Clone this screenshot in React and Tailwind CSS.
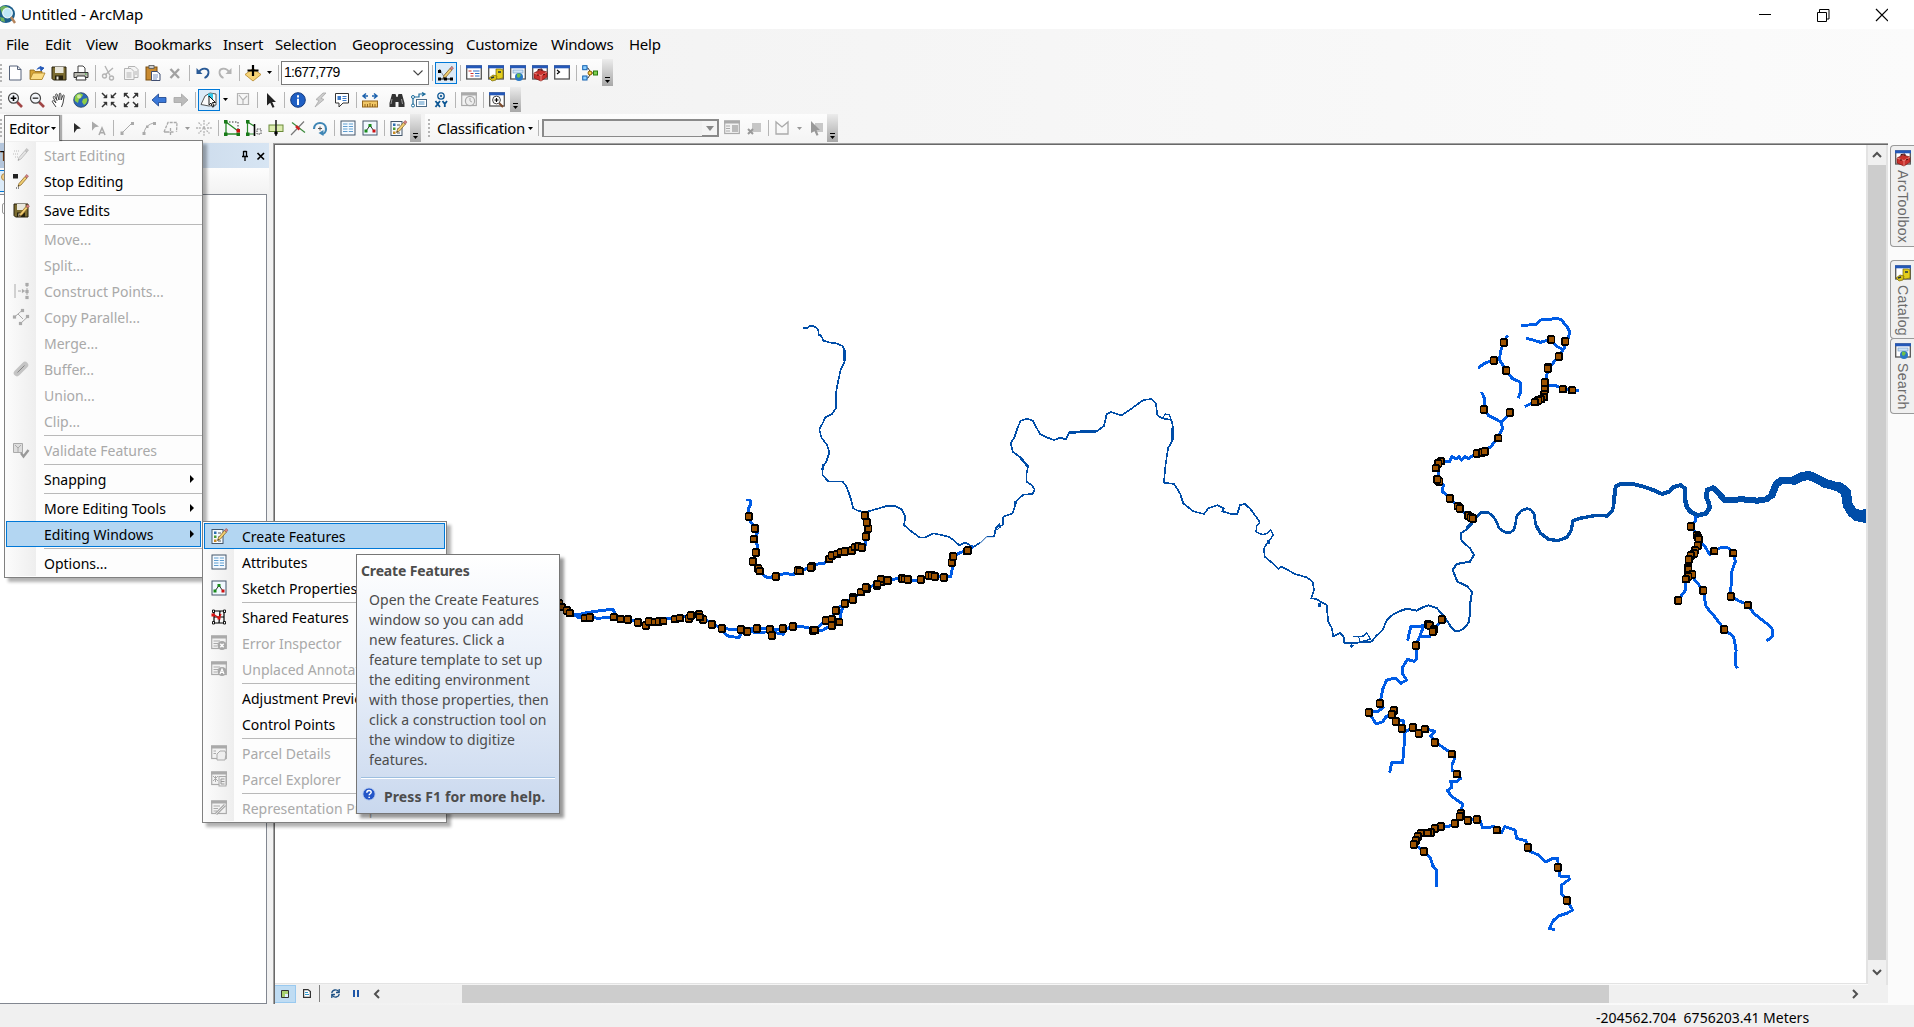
import React from "react";

const NAVY = "#004da8";
const BLUE = "#005ce6";
const GRAY = "#b4b4b4";

/* ---------- icons, drawn on a 16x16 grid ---------- */

const win = (
  <>
    <rect x=".7" y="1" width="14.6" height="13" fill="#fff" stroke="#555" strokeWidth="1.3" />
    <rect x="0" y=".3" width="16" height="3" fill="#2458b8" />
  </>
);
const grayWin = (
  <>
    <rect x=".7" y="1" width="14.6" height="12.5" fill="#f2f2f2" stroke="#aaa" strokeWidth="1.2" />
    <rect x="0" y=".5" width="16" height="3" fill="#aaa" />
  </>
);
const redBox = (
  <>
    <path d="M2 8l6-3 7 2v5l-6 4-7-3z" fill="#c9302c" stroke="#7d1512" strokeWidth=".7" />
    <path d="M2 8l7 2.6L15 7M9 10.6V16" fill="none" stroke="#f09a90" strokeWidth=".8" />
    <path d="M6 6V4.5l4-.5v2M5 10h2M11 10l2-1" fill="none" stroke="#400" strokeWidth="1" />
  </>
);
const yellowCab = (
  <>
    <path d="M8 4h5l2 1v8l-5 1-2-1z" fill="#e3cd1c" stroke="#7a6a00" strokeWidth=".7" />
    <path d="M1 13l4-3 4 1-1 4-4 1z" fill="#d9c21c" stroke="#7a6a00" strokeWidth=".7" />
    <path d="M10 7h3M3 13l3-1" stroke="#234" strokeWidth="1.4" />
  </>
);
const globeSmall = (
  <>
    <rect x="3" y="5" width="10" height="3" fill="#cfe4f7" stroke="#7aa0c8" strokeWidth=".7" />
    <circle cx="9" cy="12" r="4" fill="#2b78c4" />
    <path d="M7 9c2-1 3 0 4 1l-2 3-2-1z" fill="#6cbf4a" />
  </>
);
const disk = (
  <>
    <path d="M1 2h14v13H2.500l-1.500-1.500z" fill="#7a6b30" stroke="#26210d" strokeWidth="1" />
    <rect x="4" y="2" width="8.500" height="6" fill="#e9e7dc" />
    <rect x="4" y="10.500" width="8" height="4.500" fill="#26210d" />
    <rect x="5.500" y="11.500" width="2" height="3" fill="#e9e7dc" />
  </>
);
const pencil = (
  <>
    <path d="M5 13.500L6 10.500l6-7 2 1.500-6 7z" fill="#f2cf72" stroke="#7d5a1e" strokeWidth=".7" />
    <path d="M12 3.500l1.500-2 2 1.500L14 5z" fill="#d98484" stroke="#8a4a4a" strokeWidth=".5" />
    <path d="M5 13.500l.5-1.500 1 .8z" fill="#222" />
  </>
);
const lens = (
  <>
    <path d="M10 10l5 5" stroke="#a04545" strokeWidth="2.600" />
    <circle cx="6.500" cy="6.200" r="5" fill="#f3f6fa" stroke="#444" strokeWidth="1.200" />
  </>
);

const icons = {
  doc: <path d="M2.500 1h8l3.500 3.500V15h-11.500zM10.500 1v3.500H14" fill="#fff" stroke="#56627a" strokeWidth="1" />,
  open: (
    <>
      <path d="M1 14V5h4l1 1.500h7V14z" fill="#d8a637" stroke="#8a6516" strokeWidth=".8" />
      <path d="M1 14.500l3-6.500h12l-3 6.500z" fill="#fbdc84" stroke="#a97f22" strokeWidth=".8" />
      <path d="M8 4.500c1-2.500 4-2.500 5-1.500M11 1.500L15 3l-3 3z" fill="#2458b8" stroke="#2458b8" strokeWidth=".9" />
    </>
  ),
  save: disk,
  print: (
    <>
      <path d="M5 8V1h5l2 2v5z" fill="#fff" stroke="#444" />
      <path d="M1 7.500h14v5H1z" fill="#b9b9b0" stroke="#333" />
      <path d="M4 11h8l1 4H3z" fill="#fff" stroke="#333" />
      <path d="M12 9h1.500" stroke="#3a3" />
    </>
  ),
  cut: (
    <g fill="none" stroke={GRAY} strokeWidth="1.400">
      <path d="M4 1l5 9.500M12 3L4 10" />
      <circle cx="3.500" cy="11" r="2" />
      <circle cx="10.500" cy="13" r="2" />
    </g>
  ),
  copy: (
    <g fill="#f4f4f4" stroke={GRAY}>
      <path d="M5.500 1.500H12l3 3v8H5.500z" />
      <path d="M1.500 3.500H8l3 3v8H1.500z" />
      <path d="M3.500 8h5M3.500 10h5M3.500 12h5M12 7h2M12 9h2" />
    </g>
  ),
  paste: (
    <>
      <rect x="1" y="2" width="11" height="13" fill="#c98a30" stroke="#7a4e10" />
      <rect x="4" y=".5" width="5" height="3" fill="#ccc" stroke="#555" strokeWidth=".8" />
      <path d="M6.500 6.500h5.500l3 2.500v6.500H6.500z" fill="#fff" stroke="#3f4d70" />
      <path d="M8 10h5M8 12h5M8 14h4" stroke="#5b79b3" strokeWidth=".8" />
    </>
  ),
  del: <path d="M3.500 4l8.500 9M12 4l-8.500 9" stroke="#a2a2a2" strokeWidth="2.400" />,
  undo: (
    <>
      <path d="M4 7c3-5 10-4 9.500 1-.3 2-1.500 4-4 5" fill="none" stroke="#2a5a96" strokeWidth="1.800" />
      <path d="M1.500 3v6h6z" fill="#2a5a96" />
    </>
  ),
  redo: (
    <>
      <path d="M12 7c-3-5-10-4-9.500 1 .3 2 1.500 4 4 5" fill="none" stroke={GRAY} strokeWidth="1.800" />
      <path d="M14.500 3v6h-6z" fill={GRAY} />
    </>
  ),
  add: (
    <>
      <path d="M0 9.500l8-6 8 6-8 6.500z" fill="#f6d376" stroke="#b5862b" strokeWidth=".8" />
      <path d="M8 0v11M2.500 5.500h11" stroke="#000" strokeWidth="2.200" />
    </>
  ),
  editor: (
    <>
      <path d="M1.500 4l4 7L14 1.500" fill="none" stroke="#555" strokeDasharray="1.500 1" />
      {pencil}
      <path d="M2 14h12" stroke="#000" />
      <path d="M0 12.500h3v3H0zM6 12.500h3v3H6zM12 12.500h3v3h-3zM0 5h3v3H0z" fill="#000" />
    </>
  ),
  toc: (
    <>
      {win}
      <path d="M2.500 6h3M4.500 8.500h3M4.500 11h3" stroke="#c33" strokeWidth="1.200" />
      <path d="M7 6h6.500M9 8.500h4.500M9 11h4.500" stroke="#2e6fc9" strokeWidth="1.200" />
    </>
  ),
  catalog: <>{win}{yellowCab}</>,
  search: <>{win}{globeSmall}</>,
  toolbox: <>{win}{redBox}</>,
  python: <>{win}<path d="M3 5l2.500 2L3 9" fill="none" stroke="#000" strokeWidth="1.200" /></>,
  model: (
    <>
      <path d="M3 3h3l3 5h4M3 13h3l3-5" fill="none" stroke="#444" />
      <rect x=".7" y=".7" width="4.300" height="4" fill="#8fd0ff" stroke="#1260b0" />
      <rect x=".7" y="11" width="4.300" height="4" fill="#8fd0ff" stroke="#1260b0" />
      <circle cx="8" cy="8" r="2" fill="#ffd24a" stroke="#8a5a00" />
      <rect x="11.500" y="6" width="4" height="4" fill="#7fd050" stroke="#2a7a10" />
    </>
  ),
  zoomIn: <>{lens}<path d="M6.500 3.500v5.500M3.700 6.200h5.600" stroke="#000" strokeWidth="1.600" /></>,
  zoomOut: <>{lens}<path d="M3.700 6.200h5.600" stroke="#444" strokeWidth="1.500" /></>,
  hand: (
    <path
      d="M5 15L1.500 10c-.7-1.300.8-1.900 1.700-.8L5 11 2.300 5.500c-.4-1.200 1-1.600 1.500-.6L6 8.500 4.700 3c-.2-1.300 1.300-1.500 1.700-.3L8 8l.3-6c.1-1.100 1.500-1 1.600 0l.3 6 1.600-4.500c.4-1 1.600-.6 1.400.4L12 11l-1.500 4"
      fill="#fff" stroke="#444" strokeWidth="1"
    />
  ),
  globe: (
    <>
      <circle cx="8" cy="8" r="7.300" fill="#2c68b8" stroke="#2a4560" strokeWidth=".8" />
      <path d="M3 3c2-2 6-2 7 0l-2 3-2 1-1 4-3-2c-.8-2 0-5 1-6zM10 7l4-1c1 3-1 6-3 7l-2-3z" fill="#8fcf45" />
      <circle cx="6" cy="4.500" r="2" fill="#e6f5c8" opacity=".7" />
    </>
  ),
  fixedIn: (
    <g fill="#333" stroke="#333" strokeWidth="1.500">
      <path d="M1 1l4 4M15 1l-4 4M1 15l4-4M15 15l-4-4" />
      <path d="M6 2.500V6H2.500zM10 2.500V6h3.500zM6 13.500V10H2.500zM10 13.500V10h3.500z" strokeWidth=".4" />
    </g>
  ),
  fixedOut: (
    <g fill="#333" stroke="#333" strokeWidth="1.500">
      <path d="M2 2l4 4M14 2l-4 4M2 14l4-4M14 14l-4-4" />
      <path d="M1 5V1h4zM15 5V1h-4zM1 11v4h4zM15 11v4h-4z" strokeWidth=".4" />
    </g>
  ),
  back: <path d="M1 8l6.500-6v3.500H15v5H7.500V14z" fill="#3a78d8" stroke="#173f88" strokeWidth=".8" />,
  fwd: <path d="M15 8L8.500 2v3.500H1v5h7.500V14z" fill="#bbb" stroke="#a5a5a5" strokeWidth=".8" />,
  selFeat: (
    <>
      <path d="M0 12.500L4 4l5-3 6 1v11l-7 1z" fill="#fafafa" stroke="#555" />
      <path d="M7 1.500h5v8l-5-5z" fill="#35c6e8" />
      <path d="M8 4l6.500 6.500h-3l1.500 4-1.500.6-1.500-4-2 1.800z" fill="#fff" stroke="#000" strokeWidth=".9" />
    </>
  ),
  clearSel: <path d="M2.500 1.500h11v11h-11zM4 3l4 5 4-4M8 8v4" fill="#f4f4f4" stroke={GRAY} strokeWidth="1.200" />,
  arrow: <path d="M4 1l9 9H9.200l2.300 5-2 .8-2.300-5L4 13.500z" fill="#222" />,
  identify: (
    <>
      <circle cx="8" cy="8" r="7.300" fill="#1f5fc4" stroke="#123a80" />
      <path d="M7 6.800h2V13H7zM7 3.200h2v2.200H7z" fill="#fff" />
    </>
  ),
  bolt: <path d="M11 1L4 7.500l3 1L3 15l9-7.500-3-1.200L14 1z" fill="#ccc" stroke="#aaa" strokeWidth=".8" />,
  popup: (
    <>
      <path d="M1.500 1.500h13v9.500H9l-4 4v-4H1.500z" fill="#fff" stroke="#333" />
      <rect x="3.500" y="4" width="3.500" height="4" fill="#3e7cc9" />
      <path d="M8.500 4.500h4M8.500 6.500h4M8.500 8.500h4" stroke="#3e7cc9" />
    </>
  ),
  measure: (
    <>
      <path d="M1 4h5M10 4h5M4 1.500L1 4l3 2.500M12 1.500L15 4l-3 2.500" fill="none" stroke="#1d62ad" strokeWidth="1.500" />
      <rect x=".5" y="9" width="15" height="6" fill="#f1c766" stroke="#94651c" />
      <path d="M3 12v3M5.500 12v3M8 11v4M10.500 12v3M13 12v3" stroke="#94651c" />
    </>
  ),
  find: (
    <>
      <path d="M3 2h3.500l1 3h1l1-3H13l2.500 9v4H9.500v-5h-3v5H.5v-4z" fill="#333" />
      <path d="M3 7l-1 5M12.500 7l1 5" stroke="#999" />
    </>
  ),
  route: (
    <>
      <path d="M2 14V5h6V2h5M11 .5L14 2l-3 2" fill="none" stroke="#1c6c9c" strokeWidth="1.200" />
      <circle cx="2" cy="5" r="1.500" fill="#fff" stroke="#1c6c9c" />
      <circle cx="2" cy="13.500" r="1.500" fill="#fff" stroke="#1c6c9c" />
      <rect x="5.500" y="7.500" width="10" height="7" fill="#fff" stroke="#4a6a86" />
      <path d="M7.500 10h6M7.500 12h6" stroke="#4a90c4" />
    </>
  ),
  xy: (
    <g fill="none" stroke="#0d5794">
      <circle cx="8" cy="4" r="3.200" strokeWidth="1.300" />
      <circle cx="8" cy="4" r=".8" fill="#0d5794" />
      <path d="M2.500 9l4.500 6M7 9l-4.500 6M9.500 9l2.300 3L14 9M11.800 12v3" strokeWidth="1.800" />
    </g>
  ),
  clock: (
    <>
      {grayWin}
      <circle cx="9" cy="9" r="4.600" fill="#eee" stroke="#aaa" strokeWidth="1.200" />
      <path d="M9 6v3l2 1" fill="none" stroke="#aaa" />
    </>
  ),
  viewer: (
    <>
      {win}
      <path d="M10 11l4 4" stroke="#7d4b2c" strokeWidth="2.200" />
      <circle cx="7.500" cy="8" r="3.900" fill="#fff" stroke="#444" />
      <path d="M7.500 6v4M5.500 8h4" stroke="#000" strokeWidth="1.200" />
    </>
  ),
  editArrow: <path d="M5 3l7 5.500-4 .5-3 4z" fill="#2c2c2c" />,
  editAnno: (
    <>
      <path d="M1 1.500l7 5-4 .8-3 3.500z" fill="#aaa" />
      <path d="M8 15l3-7 3 7M9 12.800h4" fill="none" stroke="#aaa" strokeWidth="1.500" />
    </>
  ),
  line: <><path d="M3 13L13 3" stroke="#aaa" /><path d="M1.500 11.500h3V15h-3zM12 2h3v3h-3z" fill="#aaa" /></>,
  arc: <><path d="M3 13c1-6 5-9 10-10" fill="none" stroke="#aaa" /><path d="M1.500 12H4.500V15H1.500zM12 2h3v3h-3zM5 5.500h2.500V8H5z" fill="#aaa" /></>,
  poly: <path d="M1 12L5 2.500h9L13.500 12M1 12h3M7.500 8v8M3.500 12h8" fill="none" stroke="#aaa" strokeWidth="1.300" strokeDasharray="3 1" />,
  burst: <path d="M8 0v5M8 11v5M0 8h5M11 8h5M2.500 2.500l3 3M10.500 10.500l3 3M13.500 2.500l-3 3M5.500 10.500l-3 3M7 7h2v2H7z" stroke={GRAY} strokeWidth="1.300" strokeDasharray="2 .8" fill={GRAY} />,
  reshape: (
    <>
      <path d="M2 2h12v10" fill="none" stroke="#333" strokeDasharray="1.500 1.500" />
      <path d="M2 2v12h12M2 2l12 9" fill="none" stroke="#2a8a2a" strokeWidth="1.300" />
      <path d="M0 0h3.500v3.500H0zM0 12.500h3.500V16H0zM12.500 12.500H16V16h-3.500z" fill="#187a18" />
      <path d="M12.500 9H16v3.500h-3.500z" fill="#c11" />
    </>
  ),
  cutPoly: (
    <>
      <path d="M1.500 2v12H8M1.500 2L8 6" fill="none" stroke="#2a8a2a" strokeWidth="1.200" />
      <path d="M0 0h3.500v3.500H0zM0 12.500h3.500V16H0z" fill="#187a18" />
      <path d="M8.500 4v12" stroke="#000" strokeWidth="1.600" />
      <path d="M11 9h4v5h-4z" fill="none" stroke="#444" strokeDasharray="1.500 1" />
    </>
  ),
  split: (
    <>
      <rect x="1" y="5" width="14" height="6.500" fill="#dcecae" stroke="#6a8a3a" />
      <path d="M8 0v16" stroke="#222" strokeWidth="1.600" />
      <circle cx="8" cy="13" r="1.800" />
    </>
  ),
  intersect: (
    <>
      <path d="M1 15L14 1.500" stroke="#777" strokeWidth="1.200" />
      <path d="M2 2.500l13 10" stroke="#3a8a3a" strokeWidth="1.200" />
      <path d="M6 6l3.500 3.500" stroke="#c22" strokeWidth="2.500" />
    </>
  ),
  rotate: (
    <>
      <path d="M2 9c0-8 12-8 12 0 0 3-2 5-4 5" fill="none" stroke="#3f86b5" strokeWidth="2.200" />
      <path d="M11.500 10v6L6.500 13z" fill="#3f86b5" />
      <path d="M8 6.500v4M6 8.500h4" stroke="#555" />
    </>
  ),
  attrs: (
    <>
      <rect x="1" y="1" width="14" height="14" fill="#f5faff" stroke="#44576b" />
      <path d="M3 4h4.500M3 6.500h4.500M3 9h4.500M3 11.500h4.500M8.800 4H13M8.800 6.500H13M8.800 9H13M8.800 11.500H13" stroke="#5f9dd0" strokeWidth="1.100" />
    </>
  ),
  sketch: (
    <>
      <rect x="1" y="1" width="14" height="14" fill="#f1f8ff" stroke="#44576b" />
      <path d="M4 11l4-5.500 4 5.500" fill="none" stroke="#333" />
      <path d="M2.500 9.500h3v3h-3zM6.500 4h3v3h-3z" fill="#1a8a1a" />
      <path d="M10.500 9.500h3v3h-3z" fill="#c11" />
    </>
  ),
  create: (
    <>
      <rect x="1" y="1.500" width="11" height="14" fill="#f5faff" stroke="#44576b" />
      <path d="M3 3.500h2.500V6H3z" fill="#2d6fb0" />
      <path d="M3 7.500h2.500V10H3z" fill="#4b9a35" />
      <path d="M3 11.500h2.500V14H3z" fill="#c98a20" />
      <path d="M7 5h3M7 9h3M7 13h3" stroke="#555" />
      <g transform="translate(1.500 -1)">{pencil}</g>
    </>
  ),
  grayTable: (
    <>
      {grayWin}
      <path d="M2 6h4M2 8.500h4M2 11h4" stroke="#aaa" />
      <path d="M8 5h6v7H8z" fill="#bbb" />
    </>
  ),
  grayX: <><path d="M6 3h9v9H6z" fill="#c6c6c6" /><path d="M2 9l5 5M7 9l-5 5" stroke="#999" strokeWidth="2" /></>,
  grayPoly: <path d="M2 2v12h12V2L8 7z" fill="none" stroke="#aaa" strokeWidth="1.300" />,
  graySel: <><path d="M7 3h8v9H7z" fill="#c8c8c8" /><path d="M3 1l9 9H8.500l2 5-2 .8-2-4.500L3 13z" fill="#999" /></>,
  startEdit: <g opacity=".45" className="grayscale">{pencil}<path d="M1 4h6M0 7h5M2 10h3" stroke="#777" strokeDasharray="1 1" /></g>,
  stopEdit: <><path d="M0 1h5v4.500H0z" fill="#222" />{pencil}<path d="M3 15h4" stroke="#222" strokeDasharray="1 1" /></>,
  saveEdit: <>{disk}<g transform="translate(1 1)">{pencil}</g></>,
  construct: <g stroke="#aaa" fill="#aaa"><path d="M2 1v14" fill="none" /><path d="M14 1v14M5 8h4" fill="none" strokeDasharray="3 1" /><path d="M9 6l3 2-3 2zM12.500 0h3v3h-3zM12.500 7h3v3h-3zM12.500 13h3v3h-3z" strokeWidth=".2" /></g>,
  parallel: <g stroke="#aaa" fill="#aaa"><path d="M1.500 8L9 1.500M8 14l7-6.500M5 5l5 5" fill="none" /><path d="M0 6.500h3V9.500H0zM8 0H11v3H8zM6 13h3v3H6zM13 6H16v3h-3z" strokeWidth=".2" /></g>,
  buffer: <><path d="M4 12l8-8" stroke="#c4c4c4" strokeWidth="6.500" strokeLinecap="round" /><path d="M4.500 11.500l7-7" stroke="#888" /></>,
  validate: <><path d="M.5 1.500h9v9h-9z" fill="#ddd" stroke="#aaa" /><path d="M2 3l3 3 3-3M5 6v4" stroke="#aaa" fill="none" /><path d="M8 11l2.500 3.500L15.500 8" fill="none" stroke="#999" strokeWidth="2.400" /></>,
  shared: (
    <>
      <path d="M3 2h10v12H3zM3 8h10M9 2l-1 12" fill="none" stroke="#000" strokeWidth="1.200" />
      <path d="M2 5l6 4 2-4" fill="none" stroke="#d11" strokeWidth="1.400" />
      <path d="M1.500 1h2v2.500h-2zM12.500 1h2v2.500h-2zM1.500 12.500h2v2.500h-2zM12.500 12.500h2v2.500h-2z" fill="#fff" stroke="#000" strokeWidth=".9" />
      <path d="M.5 4.500h3v3h-3zM6.500 7.500h3v3h-3z" fill="#d11" />
    </>
  ),
  errInsp: <>{grayWin}<path d="M2.500 6H9M2.500 8.500H7M2.500 11H6" stroke="#aaa" /><circle cx="11" cy="10.500" r="4.500" fill="#a8a8a8" /><path d="M9.300 8.800l3.400 3.400M12.700 8.800l-3.400 3.400" stroke="#fff" strokeWidth="1.500" /></>,
  unplaced: <>{grayWin}<path d="M2.500 6H9M2.500 8.500H7M2.500 11H6" stroke="#aaa" /><circle cx="11" cy="10.500" r="4.500" fill="#a8a8a8" /><path d="M9 13l2-5 2 5M10 11.500h2" fill="none" stroke="#fff" strokeWidth="1.200" /></>,
  parcelD: <>{grayWin}<path d="M2.500 6H5M2.500 8.500H5" stroke="#aaa" /><path d="M6 15V9l3-3h5l1 3-1 6z" fill="#eee" stroke="#aaa" /></>,
  parcelE: <>{grayWin}<path d="M2 5l5 5M7 5l-5 5M4.500 5v6" stroke="#aaa" /><rect x="8" y="5.500" width="7" height="9.500" fill="#eee" stroke="#aaa" /><path d="M10 8h3.500M10 10.500h3.500M10 13h3.500M10 8v5" stroke="#999" /></>,
  repr: <>{grayWin}<path d="M2.500 6H9M2.500 8.500H7M2.500 11H6" stroke="#aaa" /><path d="M5 14l9-9" stroke="#aaa" strokeWidth="3" /><path d="M5 14l9-9" stroke="#ddd" strokeWidth="1" /></>,
};

function Icon({ name }) {
  return (
    <svg viewBox="0 0 16 16" width="16" height="16" className="shrink-0 overflow-visible">
      {icons[name]}
    </svg>
  );
}

/* ---------- toolbar parts ---------- */

const Btn = ({ n }) => <div className="flex h-full w-[22px] shrink-0 items-center justify-center"><Icon name={n} /></div>;
const Active = ({ n }) => (
  <div className="flex h-[22px] w-[22px] shrink-0 items-center justify-center border border-[#0078d7] bg-[#dcebf8]"><Icon name={n} /></div>
);
const Sep = () => <div className="flex w-[6px] shrink-0 justify-center"><div className="h-4 w-px bg-[#b5b5b5]" /></div>;
const Caret = ({ gray }) => (
  <svg width="5" height="3" viewBox="0 0 5 3" className="shrink-0"><path d="M0 0h5L2.500 3z" fill={gray ? "#999" : "#000"} /></svg>
);
const Grip = () => (
  <div className="flex w-[4px] shrink-0 flex-col gap-[2px] overflow-hidden">
    {[0, 1, 2, 3, 4].map((i) => <div key={i} className="h-[2px] w-[2px] bg-[#b4b4b4]" />)}
  </div>
);
const Overflow = () => (
  <div className="flex h-full w-[11px] shrink-0 flex-col items-center justify-end gap-[2px] bg-gradient-to-b from-[#ececec] to-[#a8a8a8] pb-[3px]">
    <div className="h-px w-[5px] bg-black" />
    <Caret />
  </div>
);
const bar = "flex items-center bg-gradient-to-b from-[#fdfdfd] to-[#f4f4f4]";

function Toolbars() {
  return (
    <div className="flex h-[84px] flex-col items-start">
      <div className={`${bar} h-[27px] w-[613px]`}>
        <Grip />
        <Btn n="doc" /><Btn n="open" /><Btn n="save" /><Btn n="print" /><Sep />
        <Btn n="cut" /><Btn n="copy" /><Btn n="paste" /><Btn n="del" /><Sep />
        <Btn n="undo" /><Btn n="redo" /><Sep />
        <Btn n="add" />
        <div className="flex w-[11px] justify-center"><Caret /></div>
        <Sep />
        <div className="flex h-[24px] w-[148px] items-center justify-between border border-[#7a7a7a] bg-white pr-[5px] pl-[2px]">
          <span className="font-['Liberation_Sans'] text-[14px] tracking-[-0.75px]">1:677,779</span>
          <svg width="10" height="6" viewBox="0 0 10 6"><path d="M.5.5L5 5 9.500.5" fill="none" stroke="#444" strokeWidth="1.100" /></svg>
        </div>
        <Sep /><Active n="editor" /><Sep />
        <Btn n="toc" /><Btn n="catalog" /><Btn n="search" /><Btn n="toolbox" /><Btn n="python" /><Sep />
        <Btn n="model" />
        <div className="ml-auto h-full"><Overflow /></div>
      </div>
      <div className={`${bar} mt-px h-[25px] w-[521px]`}>
        <Grip />
        <Btn n="zoomIn" /><Btn n="zoomOut" /><Btn n="hand" /><Btn n="globe" /><Sep />
        <Btn n="fixedIn" /><Btn n="fixedOut" /><Sep />
        <Btn n="back" /><Btn n="fwd" /><Sep />
        <Active n="selFeat" />
        <div className="flex w-[10px] justify-center"><Caret /></div>
        <div className="w-[2px]" />
        <Btn n="clearSel" /><Sep /><Btn n="arrow" /><div className="-ml-px"><Sep /></div>
        <Btn n="identify" /><Btn n="bolt" /><Btn n="popup" /><Sep />
        <Btn n="measure" />
        <div className="w-[5px]" />
        <Btn n="find" /><Btn n="route" /><Btn n="xy" /><Sep />
        <Btn n="clock" /><Sep /><Btn n="viewer" />
        <div className="ml-auto h-full"><Overflow /></div>
      </div>
      <div className="mt-[2px] flex h-[28px] gap-[4px]">
        <div className={`${bar} h-full w-[421px]`}>
          <Grip />
          <div className="w-[62px]" />
          <Btn n="editArrow" /><Btn n="editAnno" /><Sep />
          <Btn n="line" /><Btn n="arc" /><Btn n="poly" />
          <div className="flex w-[10px] justify-center"><Caret gray /></div>
          <div className="w-px" />
          <Btn n="burst" /><Sep />
          <Btn n="reshape" /><Btn n="cutPoly" /><Btn n="split" /><Btn n="intersect" /><Btn n="rotate" /><Sep />
          <Btn n="attrs" /><Btn n="sketch" /><Sep /><Btn n="create" />
          <div className="ml-auto h-full"><Overflow /></div>
        </div>
        <div className={`${bar} h-full w-[413px] pl-[3px]`}>
          <Grip />
          <span className="ml-[5px] w-[87px] text-[15px] tracking-[-0.3px]">Classification</span>
          <div className="ml-[3px] flex w-[7px] justify-center"><Caret /></div>
          <div className="w-[2px]" /><Sep />
          <div className="flex h-[18px] w-[178px] justify-end border border-t-2 border-l-2 border-[#8a8a8a] bg-[#f0f0f0]">
            <div className="flex w-[16px] items-center justify-center border-r border-b border-[#888] bg-[#f4f4f4]">
              <svg width="8" height="5" viewBox="0 0 8 5"><path d="M0 0h8L4 5z" fill="#888" /></svg>
            </div>
          </div>
          <div className="w-[2px]" />
          <Btn n="grayTable" /><Btn n="grayX" /><Sep /><Btn n="grayPoly" />
          <div className="flex w-[12px] justify-center"><Caret gray /></div>
          <Btn n="graySel" />
          <div className="ml-auto h-full"><Overflow /></div>
        </div>
      </div>
    </div>
  );
}

/* ---------- map ---------- */

const parse = (s, k) => s.trim().split(/\s+/).map((p) => {
  const [x, y] = p.split(",").map(Number);
  return [x * k, y];
});

/* Each region holds its own origin; inside it one map pixel is three units.
   kx stretches regions whose horizontal unit is coarser. */
const regions = [
  {
    x: 540, y: 300, kx: 1,
    thin: [
      [5, "790,84 802,84 808,79 816,77 828,82 836,92 836,106 842,106 846,112 850,122 868,127 888,130 908,138 914,150 914,184 908,196 902,210 894,245 888,280 888,325 876,342 856,352 848,370 838,388 844,412 862,436 868,458 860,482 848,502 848,526 866,545 908,545 920,560 932,595 940,625 955,633 975,636 1000,630 1040,618 1065,618 1085,628 1096,650 1092,675 1115,695 1140,713 1155,712 1180,700 1200,704 1225,710 1240,720 1258,736 1275,727 1290,736 1300,741 1320,728"],
      [8, "850,492 848,510"],
      [7, "914,150 914,184"],
    ],
    streams: [
      "618,600 630,600 632,612 626,625 627,648 632,665 645,684 652,700 642,716 654,738 648,756 639,783 655,805 672,826 682,834 707,828 735,820 760,824 775,810 795,808 815,798 835,792 852,790 868,776 876,765 903,755 940,745 975,740 978,708 985,684 981,667 974,646",
      "50,905 66,920 90,938 112,945 140,938 180,932 218,928 228,944 222,950",
      "90,938 115,952 150,952 175,955 222,950 243,956 265,957 294,966 318,973 345,966 370,962 380,955 405,956 420,953 452,948 478,945 500,960 516,972 546,984 568,988 602,988 640,985 689,986 735,990 758,976 800,982 825,990 857,960 876,957 888,930 915,909 940,893 980,865 1010,852 1023,836 1044,840 1087,834 1103,837 1125,842 1143,836 1167,826 1185,828 1211,831 1232,830 1238,800 1236,785 1240,768 1260,758 1284,750 1300,740",
      "546,984 555,1002 568,1010 598,1012 605,995 650,985",
      "622,993 650,998 690,995 730,1003 740,985",
      "822,990 845,992 876,975 898,965 905,930 915,909",
      "876,975 886,957 876,957",
    ],
    pts: "626,648 645,684 642,716 648,756 639,783 655,805 660,812 707,828 773,810 780,812 815,798 812,802 868,776 876,765 890,761 903,755 915,753 935,750 945,740 955,738 965,741 978,708 985,684 981,667 975,646 58,908 66,920 80,930 90,938 135,953 150,951 222,950 243,956 264,957 294,966 318,975 327,964 345,965 357,963 370,962 405,956 420,953 447,955 452,946 478,943 490,957 480,950 516,972 546,984 603,987 622,993 651,984 689,987 696,1005 729,985 759,978 820,990 825,989 857,960 876,957 876,975 898,965 888,930 915,909 940,890 939,897 963,875 980,865 977,862 1010,855 1022,845 1023,836 1012,851 1044,840 1087,834 1095,836 1103,837 1143,837 1167,825 1176,826 1185,828 1211,831 1236,786 1240,768 1280,752 1284,750",
  },
  {
    x: 980, y: 370, kx: 1,
    thin: [
      [3, "0,520 20,500 42,500"],
      [5, "20,500 42,500 48,472 68,465 70,440 98,430 106,405 110,392 130,374 158,372 164,358 155,345 140,335 139,315 144,290 125,265 98,245 92,220 104,200 112,175 122,152 140,146 158,152 180,192 200,202 222,210 240,203 258,208 268,188 300,184 350,184 372,168 380,132 392,126 424,136 460,112 490,90 515,87 528,100 532,136 548,145 574,150 580,175 578,210 564,235 556,290 552,338 582,342 600,370 610,400 640,424 672,432 685,415 712,406 732,415 726,424 755,432 772,432 780,405 795,402 812,418 828,440 840,458"],
      [7, "104,392 106,410"],
      [7, "122,265 144,290"],
      [7, "268,188 350,184"],
      [7, "578,175 578,210"],
      [3.500, "48,472 58,462 62,470 50,480"],
      [3.500, "548,145 556,132 568,133 574,150"],
      [4, "840,458 830,468 828,486 848,494 862,490 872,478 880,496 864,515"],
      [5, "864,515 852,535 854,560 876,578 895,597 905,590 945,612 980,622 998,635 1002,660 994,685 1010,687 1020,694 1040,705 1042,730 1045,755 1056,775 1060,800 1080,788 1092,802 1092,818 1112,820 1145,817 1175,815 1188,798 1208,780 1220,750 1240,733"],
      [9, "1112,832 1118,824"],
      [9, "1020,700 1020,712"],
      [9, "866,510 864,522"],
      [3.500, "1118,800 1150,798 1160,788 1172,808 1140,815 1136,800"],
      [6, "1220,750 1240,733 1258,724 1280,716 1310,722 1328,712 1345,706 1370,714 1395,742 1412,770 1424,783 1438,783 1452,775 1468,755 1470,705 1476,665 1460,648 1432,635 1418,600 1430,582 1470,575 1482,555 1470,535 1445,512 1442,490 1465,475 1476,462 1490,440"],
    ],
    streams: [],
    pts: "",
  },
  {
    x: 1340, y: 300, kx: 1.0982,
    thin: [
      [8, "345,683 358,670 370,655 385,638 405,638 415,645 425,660 435,685 445,693 455,698 465,697 475,690 480,670 482,650 495,632 510,626 520,628 530,640 535,675 548,700"],
      [10, "535,675 548,700 570,718 595,722 620,712 632,690 636,662 655,655 700,646 730,648 745,630 750,600"],
      [12, "748,612 750,585 753,560 765,552 800,552 830,560 860,572 880,582 900,575 910,562 930,555 942,565 944,610"],
      [14, "944,605 948,622 958,636 978,646 1000,640 1010,622 1007,608 1000,590 1003,570 1020,563 1032,575"],
      [18, "1022,566 1035,580 1050,600 1100,598 1140,602 1165,598 1180,585 1190,555"],
      [22, "1180,585 1192,552 1205,542 1240,542 1262,530"],
      [27, "1240,542 1262,530 1280,526 1300,535 1325,550 1365,562 1382,580"],
      [30, "1365,562 1382,576 1387,615 1400,638 1415,648"],
      [36, "1412,646 1425,648"],
      [40, "1430,648 1460,648"],
    ],
    streams: [
      "494,76 535,74 548,60 575,58 590,54 605,60 620,80 628,95 622,120 612,145 598,168 580,192 568,204 562,246 560,268 556,285 532,305 505,320",
      "508,114 548,127 577,117 590,138 608,148",
      "560,260 585,255 608,266 634,270 654,271",
      "458,106 447,126 438,155 436,180 454,210 470,235 492,246 494,275 487,294",
      "377,204 395,190 420,180 436,180",
      "387,276 396,300 393,327 405,346 440,366 444,385 432,413 412,440 395,453 374,460 350,476 342,470 332,480 325,470 318,477 305,470 300,484 275,485 262,503 270,520 265,537 282,555 280,575 300,594 325,622 350,648 362,655",
      "440,366 455,350 464,336",
      "972,648 972,662 958,678 975,705 980,720 970,750 953,777 951,805 945,835 944,870 924,900",
      "980,718 998,742 1010,764 1022,752 1040,743 1062,744 1074,758 1080,785 1070,815 1067,888 1090,903 1114,914 1130,940 1165,970 1180,985 1182,1008 1166,1023",
      "958,815 968,838 992,870 1000,920 1020,945 1049,987 1075,1010 1082,1050 1080,1095 1086,1105",
    ],
    pts: "577,117 615,123 598,168 569,202 568,205 560,246 560,266 558,283 556,290 548,296 542,300 532,305 609,266 634,269 447,126 420,180 454,210 393,327 464,336 432,413 374,459 388,456 396,453 275,482 268,490 262,503 271,543 265,537 300,594 322,617 327,624 350,645 357,652 362,655 958,678 975,705 978,712 980,718 977,735 970,750 968,760 958,766 953,777 950,800 951,806 962,822 952,828 945,836 924,900 1022,752 1074,758 992,870 1068,888 1114,914 1049,987",
  },
  {
    x: 1340, y: 600, kx: 1,
    thin: [],
    streams: [
      "203,122 212,80 235,80 265,72 280,92 268,110 240,108 250,80",
      "306,58 295,72 280,90",
      "240,108 228,135 230,175 222,184 202,178 186,205 188,222 200,240 182,250 165,234 140,240 128,268 120,310 130,322 115,334 87,336 108,372 128,365 138,350 155,342 162,330",
      "155,342 168,362 190,362 194,398 218,380 237,398 255,386 284,394 272,408 285,425 310,443 336,461 344,475 336,495 336,510 350,522 362,535 350,544 332,544 336,562 322,572 336,590 368,612 362,640 345,668 325,680 303,678 285,684 273,695 242,698 228,720 222,733 252,753 272,775 278,797 290,810 290,860",
      "168,362 186,384 194,398 192,440 188,488 155,488 149,518",
      "362,645 384,660 411,656 422,665 428,684 462,680 485,698 494,680 525,690 530,715 558,722 570,754 595,765 616,786 636,776 652,774 656,800 658,828 686,830 688,838 665,855 664,880 680,900 698,930 680,940 655,948 640,962 628,985 645,990",
    ],
    pts: "306,58 265,72 269,75 281,88 279,93 228,135 120,309 87,336 162,331 156,342 168,363 186,384 219,381 237,399 255,386 285,426 336,461 351,521 362,640 360,648 384,660 411,657 345,669 303,678 285,685 273,696 255,698 264,698 242,698 233,708 228,720 222,733 252,753 471,689 564,741 654,801 681,900",
  },
].map((r) => ({
  ...r,
  thin: r.thin.map(([w, p]) => [w, parse(p, r.kx).join(" ")]),
  streams: r.streams.map((p) => parse(p, r.kx).join(" ")),
  pts: r.pts ? parse(r.pts, r.kx) : [],
}));

function MapView() {
  return (
    <svg viewBox="275 145 1591 838" className="block h-[838px] w-[1591px]" shapeRendering="crispEdges">
      {regions.map((r, i) => (
        <g key={i} transform={`translate(${r.x} ${r.y}) scale(0.33333)`} fill="none" strokeLinejoin="round">
          {r.thin.map(([w, p], j) => (
            <polyline key={j} points={p} stroke={NAVY} strokeWidth={w} strokeLinecap={w > 13 && w < 40 ? "round" : "butt"} />
          ))}
        </g>
      ))}
      {regions.map((r, i) => (
        <g key={i} transform={`translate(${r.x} ${r.y}) scale(0.33333)`} strokeLinejoin="round">
          {r.streams.map((p, j) => <polyline key={j} points={p} fill="none" stroke={BLUE} strokeWidth="8.800" />)}
          {r.pts.map(([x, y], j) => (
            <g key={j}>
              <rect x={x - 12} y={y - 9} width="24" height="21" fill="#000" />
              <rect x={x - 9} y={y - 12} width="18" height="26" fill="#000" />
              <rect x={x - 7.5} y={y - 6} width="15" height="14" fill="#9c5200" />
            </g>
          ))}
        </g>
      ))}
    </svg>
  );
}

/* ---------- menus ---------- */

const editorMenu = [
  ["Start Editing", "startEdit", 0], ["Stop Editing", "stopEdit", 1], null,
  ["Save Edits", "saveEdit", 1], null,
  ["Move...", "", 0], ["Split...", "", 0], ["Construct Points...", "construct", 0], ["Copy Parallel...", "parallel", 0],
  ["Merge...", "", 0], ["Buffer...", "buffer", 0], ["Union...", "", 0], ["Clip...", "", 0], null,
  ["Validate Features", "validate", 0], null,
  ["Snapping", "", 1, "sub"], null,
  ["More Editing Tools", "", 1, "sub"], ["Editing Windows", "", 1, "sub", "on"], null,
  ["Options...", "", 1],
];
const windowsMenu = [
  ["Create Features", "create", 1, "", "on"], ["Attributes", "attrs", 1], ["Sketch Properties", "sketch", 1], null,
  ["Shared Features", "shared", 1], ["Error Inspector", "errInsp", 0], ["Unplaced Annotation", "unplaced", 0], null,
  ["Adjustment Preview", "", 1], ["Control Points", "", 1], null,
  ["Parcel Details", "parcelD", 0], ["Parcel Explorer", "parcelE", 0], null,
  ["Representation Properties", "repr", 0],
];

function Menu({ items, className }) {
  return (
    <div className={`absolute border border-[#808080] bg-[#fdfdfd] pt-px shadow-[4px_4px_3px_rgba(0,0,0,0.3)] ${className}`}>
      <div className="bg-[linear-gradient(to_right,#fcfcfc,#eeeeee_31px,#fdfdfd_31px)]">
        {items.map((it, i) =>
          it === null ? (
            <div key={i} className="flex h-[3px] items-center pl-[39px]"><div className="h-px w-full bg-[#b9b9b9]" /></div>
          ) : (
            <div
              key={i}
              className={`flex h-[26px] items-center ${it[4] ? "mr-px ml-px border border-[#0078d7] bg-[#b3d6f2] pr-[6px]" : "pr-[8px] pl-px"} ${it[2] ? "text-black" : "text-[#a9a9a9]"}`}
            >
              <div className={`flex shrink-0 justify-center ${it[4] ? "w-[28px]" : "w-[30px]"}`}>{it[1] && <Icon name={it[1]} />}</div>
              <span className={`flex-1 whitespace-nowrap ${it[4] ? "ml-[9px]" : "ml-[8px]"}`}>{it[0]}</span>
              {it[3] && <svg width="4" height="8" viewBox="0 0 4 8"><path d="M0 0l4 4-4 4z" /></svg>}
            </div>
          )
        )}
      </div>
    </div>
  );
}

function Tooltip() {
  return (
    <div className="absolute top-[554px] left-[356px] flex h-[260px] w-[204px] flex-col border border-[#767676] bg-gradient-to-b from-white via-[#e6edf8] to-[#c9d8ee] text-[#4c4c4c] shadow-[4px_4px_3px_rgba(0,0,0,0.4)]">
      <div className="mt-[6px] ml-[4px] text-[14px] leading-5 font-bold whitespace-nowrap tracking-[-0.15px]">Create Features</div>
      <div className="mt-[9px] ml-[12px] text-[14px] leading-5 tracking-[0.06px] whitespace-nowrap">
        Open the Create Features<br />window so you can add<br />new features. Click a<br />feature template to set up<br />the editing environment<br />
        with those properties, then<br />click a construction tool on<br />the window to digitize<br />features.
      </div>
      <div className="mx-[4px] mt-[7px] h-[2px] border-b border-white bg-[#9dbfe0]" />
      <div className="mt-[8px] flex items-start pl-[5px]">
        <svg width="14" height="14" viewBox="0 0 16 16">
          <circle cx="8" cy="8" r="7" fill="#2456c8" stroke="#b8cdf0" />
          <path d="M5.500 6.500c0-3.500 5-3.300 5-.5 0 1.800-2.300 1.600-2.300 3.500M8.200 11v1.700" fill="none" stroke="#fff" strokeWidth="1.700" />
        </svg>
        <span className="ml-[8px] text-[14px] leading-5 font-bold tracking-[0.1px] whitespace-nowrap">Press F1 for more help.</span>
      </div>
    </div>
  );
}

/* ---------- page ---------- */

const menuBar = [
  ["File", "w-[39px]"], ["Edit", "w-[41px]"], ["View", "w-[48px]"], ["Bookmarks", "w-[89px]"], ["Insert", "w-[52px]"],
  ["Selection", "w-[77px]"], ["Geoprocessing", "w-[114px]"], ["Customize", "w-[85px]"], ["Windows", "w-[78px]"], ["Help", "w-[40px]"],
];

function SideTab({ icon, label, className }) {
  return (
    <div className={`flex w-[24px] flex-col items-center gap-[4px] rounded-l-[4px] border border-r-0 border-[#9a9a9a] bg-[#f0f0f0] pt-[4px] ${className}`}>
      <Icon name={icon} />
      <span className="font-['Liberation_Sans'] text-[14px] leading-4 tracking-[0.4px] text-[#6b6b6b] [writing-mode:vertical-rl]">{label}</span>
    </div>
  );
}

const Chevron = ({ d }) => (
  <svg width="10" height="10" viewBox="0 0 10 10"><path d={d} fill="none" stroke="#505050" strokeWidth="2" /></svg>
);

export default function App() {
  return (
    <div className="relative flex h-[1027px] w-[1914px] flex-col overflow-hidden bg-gradient-to-r from-[#f0f0f0] to-[#fbfbfb] font-['Noto_Sans','Open_Sans',sans-serif] text-[14px] text-black">
      <div className="flex h-[29px] shrink-0 items-center bg-white">
        <svg width="16" height="20" viewBox="0 0 16 20">
          <circle cx="6" cy="9" r="9" fill="#1d5f8c" />
          <path d="M0 3c3-3 7-2 9 0L6 7 2 9zM0 12l4 1 1 4-4-1z" fill="#6fb35c" />
          <circle cx="7.500" cy="8" r="4.800" fill="#bfe6f7" stroke="#e8f4fa" strokeWidth="1.300" />
          <path d="M11 12l4 6" stroke="#b4835a" strokeWidth="2.400" />
        </svg>
        <span className="ml-[5px] pb-px text-[15px] tracking-[-0.05px]">Untitled - ArcMap</span>
        <svg width="130" height="14" viewBox="0 0 130 14" className="mr-[26px] ml-auto" fill="none" stroke="#000">
          <path d="M1 6.500h12M59.500 4.500h9v9h-9zM61.500 4.500v-3h9.500v9.500h-2.500" />
          <path d="M118 1l12 12M130 1l-12 12" strokeWidth="1.200" />
        </svg>
      </div>
      <div className="flex h-[30px] shrink-0 items-center pl-[6px]">
        {menuBar.map(([t, w]) => <span key={t} className={`${w} shrink-0 text-[15px] tracking-[-0.25px] whitespace-nowrap`}>{t}</span>)}
      </div>
      <Toolbars />

      <div className="flex h-[862px] shrink-0">
        <div className="flex w-[269px] shrink-0 flex-col">
          <div className="flex h-[25px] items-center bg-gradient-to-r from-[#b4c6dc] to-[#d7e5f3]">
            <span>T</span>
            <svg width="24" height="12" viewBox="0 0 24 12" className="mr-[4px] ml-auto" fill="none" stroke="#000">
              <path d="M2.500 1v5M1 6.500h6M5.500 1v5M2.500 1.500h3M4 7v4" strokeWidth="1.300" />
              <path d="M16.500 3l6.500 6.500M23 3l-6.500 6.500" strokeWidth="1.700" />
            </svg>
          </div>
          <div className="flex h-[26px] items-center bg-gradient-to-b from-[#fdfdfd] to-[#f2f2f2]">
            <div className="h-[22px] w-[10px] border-y border-[#0078d7] bg-[#dcebf8] pt-[2px] pl-px">
              <div className="h-[8px] w-[8px] rounded-full border border-[#b08a4a] bg-[#f3d08a]" />
            </div>
          </div>
          <div className="mr-[2px] h-[810px] border border-l-0 border-[#828790] bg-white pt-[8px] pl-[2px]">
            <div className="h-[11px] w-[10px] rounded-[2px] border border-[#999] bg-white" />
          </div>
        </div>
        <div className="ml-[4px] flex h-[861px] w-[1615px] shrink-0 flex-col border-t border-l border-[#a0a0a0]">
          <div className="flex h-[860px] flex-col border-t border-l border-[#696969]">
            <div className="flex h-[840px]">
              <div className="h-[839px] w-[1593px] border-r-2 border-b border-[#e3e3e3] bg-white"><MapView /></div>
              <div className="flex w-[18px] flex-col items-center bg-[#f0f0f0]">
                <div className="flex h-[20px] items-center"><Chevron d="M1 7l4-4 4 4" /></div>
                <div className="h-[795px] w-full bg-[#cdcdcd]" />
                <div className="flex h-[24px] items-center"><Chevron d="M1 3l4 4 4-4" /></div>
              </div>
              <div className="w-[2px] bg-[#e3e3e3]" />
            </div>
            <div className="flex h-[18px] items-start bg-[#f0f0f0]">
              <div className="flex h-full w-[21px] items-center justify-center border border-l-0 border-[#99c9ef] bg-[#bfdcf3] pb-px">
                <svg width="8" height="8" viewBox="0 0 8 8"><path d="M.5.5h7v7h-7z" fill="#a8d070" stroke="#333" /><path d="M4 4h3v3H4z" fill="#dff0ff" /></svg>
              </div>
              <svg width="8" height="9" viewBox="0 0 8 9" className="mt-[4px] ml-[7px]"><path d="M.6.6h4.400l2.400 2v5.800H.6z" fill="#fff" stroke="#333" strokeWidth="1.200" /><path d="M2 3.500h3M2 5.500h4" stroke="#39c" /></svg>
              <div className="ml-[8px] h-[17px] w-px bg-[#808080]" />
              <svg width="9" height="9" viewBox="0 0 9 9" className="mt-[4px] ml-[11px]" fill="none" stroke="#1d5083" strokeWidth="1.300">
                <path d="M.8 4c.5-3.500 5-4 6.700-1.500M8.200 0v3.500H5M8.200 5c-.5 3.500-5 4-6.700 1.500M.8 9V5.500H4" />
              </svg>
              <svg width="6" height="7" viewBox="0 0 6 7" className="mt-[5px] ml-[13px]"><path d="M0 0h2v7H0zM4 0h2v7H4z" fill="#1f57a8" /></svg>
              <div className="mt-[4px] ml-[13px] flex"><Chevron d="M7 1L3 5l4 4" /></div>
              <div className="ml-[80px] h-[18px] w-[1147px] bg-[#cdcdcd]" />
              <div className="mt-[4px] ml-[241px] flex"><Chevron d="M3 1l4 4-4 4" /></div>
            </div>
          </div>
        </div>
        <div className="flex w-[26px] flex-col items-end bg-[#fbfbfb] pt-[2px]">
          <SideTab icon="toolbox" label="ArcToolbox" className="h-[102px]" />
          <SideTab icon="catalog" label="Catalog" className="mt-[13px] h-[79px]" />
          <SideTab icon="search" label="Search" className="-mt-px h-[76px]" />
        </div>
      </div>
      <div className="flex h-[22px] shrink-0 items-start bg-[#f0f0f0] pt-[5px] pl-[1596px]">
        <span className="leading-4 whitespace-pre">-204562.704  6756203.41 Meters</span>
      </div>

      <Menu items={editorMenu} className="top-[140px] left-[4px] h-[438px] w-[199px]" />
      <div className="absolute top-[115px] left-[4px] flex h-[26px] w-[56px] items-center border border-b-0 border-[#808080] bg-[#fdfdfd] pb-px pl-[4px] shadow-[2px_0_1px_rgba(0,0,0,0.3)]">
        <span className="w-[40px] text-[15px] tracking-[-0.3px]">Editor</span>
        <div className="ml-[2px]"><Caret /></div>
      </div>
      <Menu items={windowsMenu} className="top-[521px] left-[202px] h-[302px] w-[245px]" />
      <Tooltip />
    </div>
  );
}
